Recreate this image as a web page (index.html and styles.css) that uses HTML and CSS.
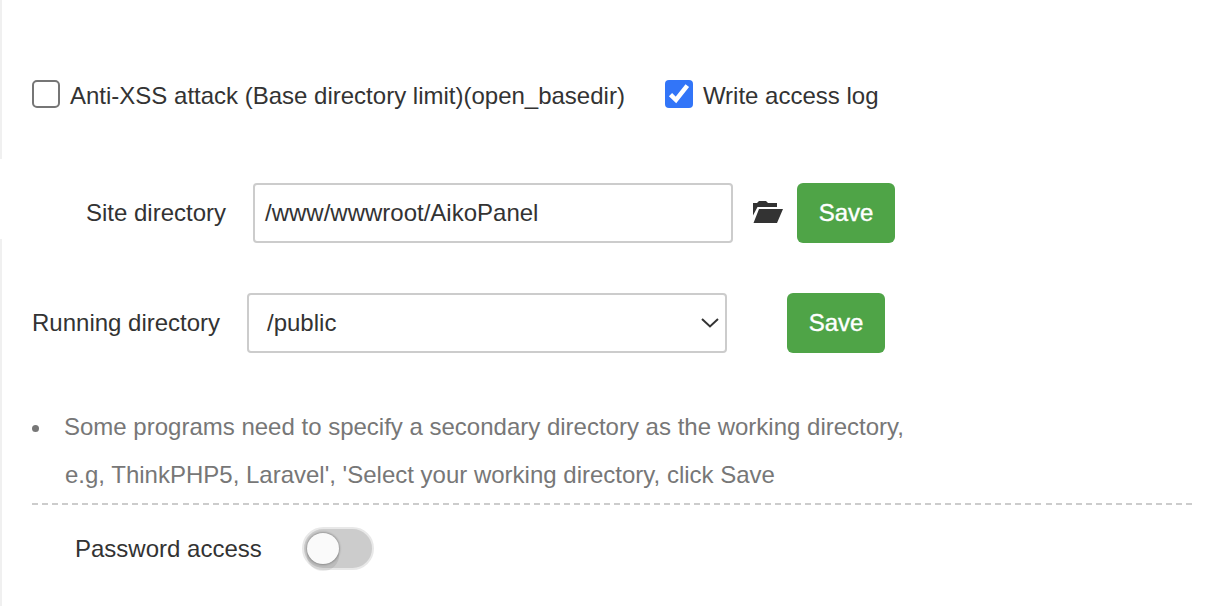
FILE: index.html
```html
<!DOCTYPE html>
<html lang="en">
<head>
<meta charset="utf-8">
<title>Site directory</title>
<link rel="stylesheet" href="styles.css">
</head>
<body>
<div class="layout">
  <div class="rail"><span class="rail-top"></span><span class="rail-bottom"></span></div>
  <main class="panel">
    <div class="options">
      <label class="option"><span class="box"></span><span>Anti-XSS attack (Base directory limit)(open_basedir)</span></label>
      <label class="option"><span class="box checked"><svg width="28" height="28" viewBox="0 0 28 28"><path d="M5.5 14.6 11 20 22.3 5.6" fill="none" stroke="#fff" stroke-width="4.5"/></svg></span><span>Write access log</span></label>
    </div>
    <div class="row site">
      <span class="label">Site directory</span>
      <div class="field">/www/wwwroot/AikoPanel</div>
      <svg class="folder" width="30" height="22" viewBox="0 0 30 22"><path d="M0 14.5V2h4L6 0h7l2 2h9v4H4.5Z M6 8H30l-6 14H.5Z" fill="#333"/></svg>
      <button class="save">Save</button>
    </div>
    <div class="row running">
      <span class="label">Running directory</span>
      <div class="field select"><span>/public</span><svg width="18" height="10" viewBox="0 0 18 10"><path d="M1 1l8 7.5L17 1" fill="none" stroke="#333" stroke-width="2"/></svg></div>
      <button class="save">Save</button>
    </div>
    <div class="note">
      <span class="bullet"></span>
      <p>Some programs need to specify a secondary directory as the working directory,<br><span class="continued">e.g, ThinkPHP5, Laravel', 'Select your working directory, click Save</span></p>
    </div>
    <div class="divider"></div>
    <div class="password"><span>Password access</span><span class="toggle"><span class="knob"></span></span></div>
  </main>
</div>
</body>
</html>
```
FILE: styles.css
```css
* { box-sizing: border-box; }
body {
  margin: 0;
  background: #fff;
  color: #333;
  font: 24px/48px "Liberation Sans", Arial, sans-serif;
}
.layout { display: flex; height: 606px; overflow: hidden; }
.rail { display: flex; flex-direction: column; justify-content: space-between; width: 2px; }
.rail span { background: #f0f0f0; }
.rail-top { height: 159px; }
.rail-bottom { height: 367px; }
.panel { flex: 1; padding: 72px 26px 0 30px; white-space: nowrap; }
.options { display: flex; gap: 40px; height: 48px; }
.option { display: flex; }
.box { width: 28px; height: 28px; margin: 8px 10px 0 0; border: 2px solid #767676; border-radius: 5px; }
.box.checked { border: 0; border-radius: 4px; background: #3275f8; }
.box svg { display: block; }
.row { display: flex; align-items: center; height: 60px; }
.site { margin-top: 63px; }
.running { margin-top: 50px; }
.site .label { width: 221px; padding-left: 54px; }
.running .label { width: 215px; }
.field { display: flex; align-items: center; width: 480px; height: 60px; padding: 0 10px; border: 2px solid #ccc; border-radius: 4px; }
.select { justify-content: space-between; padding: 0 6px 0 18px; }
.folder { margin: 0 15px 2px 19.5px; }
.save { width: 98px; height: 60px; margin-left: auto; padding: 0; border: 0; border-radius: 6px; background: #4fa447; color: #fff; font: inherit; -webkit-text-stroke: .4px #fff; }
.site { width: 863px; }
.running { width: 853px; }
.note { display: flex; margin-top: 50px; color: #777; }
.note p { margin: 0; }
.continued { margin-left: 1px; }
.bullet { width: 7px; height: 7px; margin: 22px 25px 0 0; border-radius: 50%; background: #777; }
.divider { height: 2px; margin-top: 4px; background: repeating-linear-gradient(90deg, #ccc 0 6px, transparent 6px 10.035px); }
.site .folder { margin-right: 0; }
.password { display: flex; align-items: center; height: 48px; margin-top: 20px; padding-left: 43px; }
.toggle { width: 72px; height: 43px; margin: 0 0 2px 40.5px; padding: 4px 3px; border: 2px solid #e8e8e8; border-radius: 22px; background: #ccc; }
.knob { display: block; width: 32px; height: 31px; border-radius: 50%; background: #fafafa; box-shadow: 0 0 2px 1px rgba(0,0,0,.25), 0 7px 0 rgba(0,0,0,.08); }
```
